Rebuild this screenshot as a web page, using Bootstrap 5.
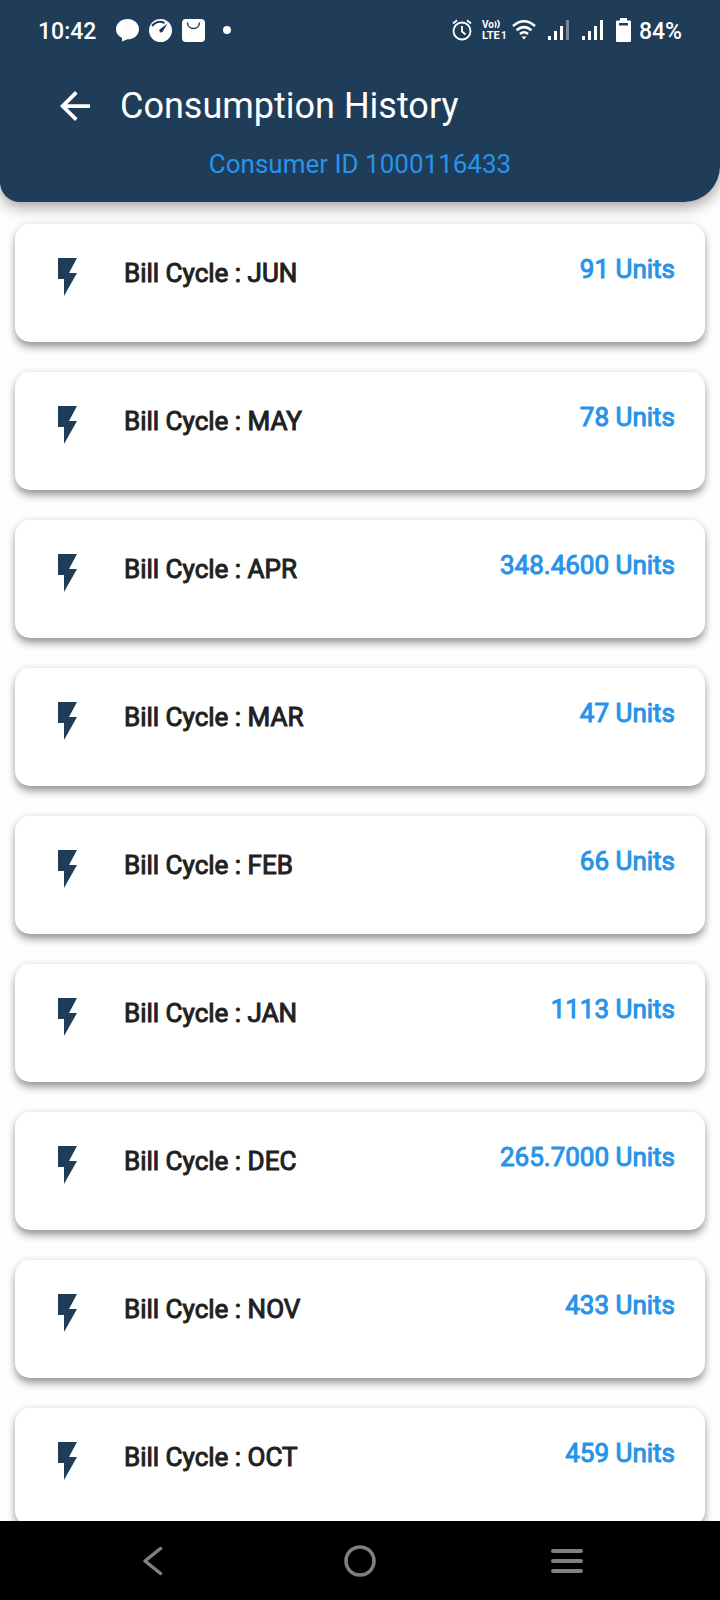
<!DOCTYPE html>
<html lang="en">
<head>
<meta charset="utf-8">
<meta name="viewport" content="width=device-width, initial-scale=1">
<title>Consumption History</title>
<link href="https://cdn.jsdelivr.net/npm/bootstrap@5.3.0/dist/css/bootstrap.min.css" rel="stylesheet">
<style>
  :root { --navy: #1f3c58; --sky: #2893ea; }
  body { font-family: Roboto, "Noto Sans", sans-serif; background: #fefefe; }
  svg { display: block; flex: none; }
  .app-header {
    background: var(--navy);
    border-radius: 0 0 36px 20px;
    box-shadow: 0 4px 16px rgba(0, 0, 0, .4);
    z-index: 1;
  }
  .status-bar { height: 60px; padding: 0 38px; font-size: 23px; line-height: 28px; font-weight: 500; }
  .status-text { padding-top: 4px; }
  .notices { gap: 10px; margin-left: 20px; }
  .title-row { height: 88px; padding: 4px 60px 0; gap: 30px; }
  .screen-title { font-size: 36px; line-height: 44px; }
  .consumer-id { font-size: 26px; line-height: 32px; color: var(--sky); padding-bottom: 22px; }
  .scroll-area { scrollbar-width: none; }
  .scroll-area::-webkit-scrollbar { display: none; }
  .bill-list { padding: 22px 15px; gap: 30px; }
  .bill-card {
    --bs-card-border-width: 0;
    --bs-card-border-radius: 15px;
    height: 118px;
    flex: none;
    box-shadow: 0 6px 8px -1px rgba(0, 0, 0, .36), 0 1px 8px rgba(0, 0, 0, .14);
  }
  .bill-body { padding: 29px 30px 0 43px; font-size: 26px; line-height: 32px; }
  .bill-icon { margin-top: 5px; }
  .bill-name { margin: 4px 0 0 47px; color: #212121; -webkit-text-stroke: 1px #212121; }
  .bill-units { color: var(--sky); -webkit-text-stroke: 1px var(--sky); }
  .system-nav { height: 79px; padding: 0 50px; }
</style>
</head>
<body>
<div class="d-flex flex-column vh-100 overflow-hidden">
  <header class="app-header text-white position-relative flex-shrink-0">
    <div class="status-bar d-flex align-items-center">
      <span class="status-text">10:42</span>
      <div class="notices d-flex align-items-center">
        <svg width="23" height="23" viewBox="0 0 23 23" aria-hidden="true"><path fill="#fff" d="M11.500 0C18 0 23 4.500 23 10.200S18 20.300 11.500 20.300L6 22.500V19C2 17 0 14 0 10.200 0 4.500 5 0 11.500 0z"/></svg>
        <svg width="23" height="23" viewBox="0 0 23 23" aria-hidden="true"><circle cx="11.500" cy="11.500" r="11.500" fill="#fff"/><path d="M3 7C7 2.500 12 2.300 15.500 4" fill="none" stroke="#1f3c58" stroke-width="2"/><path d="M18.500 4.500L13.500 13a2 2 0 0 1-3-2.500z" fill="#1f3c58"/></svg>
        <svg width="23" height="23" viewBox="0 0 23 23" aria-hidden="true"><rect width="23" height="23" rx="4" fill="#fff"/><path d="M5.500 3.500c0 8 12 8 12 0" fill="none" stroke="#1f3c58" stroke-width="1.500"/></svg>
        <svg class="ms-2" width="8" height="8" viewBox="0 0 8 8" aria-hidden="true"><circle cx="4" cy="4" r="4" fill="#fff"/></svg>
      </div>
      <div class="d-flex align-items-center ms-auto">
        <svg width="20" height="22" viewBox="0 0 20 22" fill="none" stroke="#fff" stroke-width="1.800" aria-hidden="true"><circle cx="10" cy="12" r="8.500"/><path d="M10 7v5.500l3.500 3M1 4.500L5 1.200M19 4.500L15 1.200"/></svg>
        <svg class="ms-2" width="28" height="22" viewBox="0 0 28 22" fill="#fff" font-family="Roboto, sans-serif" font-weight="700" aria-hidden="true"><text x="2" y="9" font-size="10">Vo</text><path d="M15 2.500q2 2.500 0 6M17.500 1q3.500 4 0 8" fill="none" stroke="#fff" stroke-width="1.500"/><text x="2" y="20" font-size="11">LTE</text><text x="21" y="20" font-size="10">1</text></svg>
        <svg class="ms-1" width="24" height="22" viewBox="0 0 24 22" fill="none" stroke="#fff" stroke-width="2.600" aria-hidden="true"><path d="M1 7Q12-2.500 23 7M4.500 11.200Q12 5 19.500 11.200M8 15Q12 11.500 16 15"/><path d="M9.500 17.500h5L12 20.500z" fill="#fff" stroke="none"/></svg>
        <svg class="ms-2 ps-1" width="26" height="20" viewBox="0 0 22 20" fill="#fff" aria-hidden="true"><path d="M0 16h3v4H0zM6 11h3v9H6zM12 6h3v14h-3z"/><path d="M18 0h3v20h-3z" opacity=".4"/></svg>
        <svg class="ms-2 ps-1" width="26" height="20" viewBox="0 0 22 20" fill="#fff" aria-hidden="true"><path d="M0 16h3v4H0zM6 11h3v9H6zM12 6h3v14h-3zM18 0h3v20h-3z"/></svg>
        <svg class="ms-2 ps-1" width="19" height="24" viewBox="0 0 15 24" aria-hidden="true"><path fill="#fff" fill-rule="evenodd" d="M4 0h7v2.500h3q1 0 1 1V23q0 1-1 1H1q-1 0-1-1V3.500q0-1 1-1h3zM3 5v2.500h9V5z"/></svg>
        <span class="status-text ms-2">84%</span>
      </div>
    </div>
    <div class="title-row d-flex align-items-center">
      <button type="button" class="btn p-0 border-0" aria-label="Back">
        <svg width="30" height="30" viewBox="4 4 16 16"><path fill="#fff" d="M20 11H7.830l5.590-5.590L12 4l-8 8 8 8 1.410-1.410L7.830 13H20v-2z"/></svg>
      </button>
      <h1 class="screen-title fw-normal mb-0">Consumption History</h1>
    </div>
    <p class="consumer-id text-center mb-0">Consumer ID 1000116433</p>
  </header>

  <main class="scroll-area flex-grow-1 overflow-auto">
    <div id="bills" class="bill-list d-flex flex-column"></div>
  </main>

  <nav class="system-nav bg-black d-flex flex-shrink-0 align-items-center" aria-label="System">
    <button type="button" class="btn p-0 border-0 flex-fill w-100 d-flex justify-content-center" aria-label="Back"><svg width="20" height="30" viewBox="0 0 20 30" fill="none" stroke="#808080" stroke-width="3.500" stroke-linecap="round" stroke-linejoin="round"><path d="M17.500 2.500L2 15l15.500 12.500"/></svg></button>
    <button type="button" class="btn p-0 border-0 flex-fill w-100 d-flex justify-content-center" aria-label="Home"><svg width="32" height="32" viewBox="0 0 32 32" fill="none" stroke="#808080" stroke-width="3.500"><circle cx="16" cy="16" r="14"/></svg></button>
    <button type="button" class="btn p-0 border-0 flex-fill w-100 d-flex justify-content-center" aria-label="Recent apps"><svg width="34" height="26" viewBox="0 0 34 26" stroke="#808080" stroke-width="4" stroke-linecap="round"><path d="M3 3h28M3 13h28M3 23h28"/></svg></button>
  </nav>
</div>

<template id="bill-template">
  <article class="card bill-card">
    <div class="bill-body d-flex align-items-start">
      <svg class="bill-icon" width="19" height="38" viewBox="0 0 19 38" aria-hidden="true"><path fill="#1f3c58" d="M0 0h19l-8 15h8L6 38V21H0z"/></svg>
      <span class="bill-name"></span>
      <span class="bill-units ms-auto"></span>
    </div>
  </article>
</template>
<script src="https://cdn.jsdelivr.net/npm/bootstrap@5.3.0/dist/js/bootstrap.bundle.min.js"></script>
<script>
  const bills = [
    ["JUN", "91"], ["MAY", "78"], ["APR", "348.4600"], ["MAR", "47"], ["FEB", "66"],
    ["JAN", "1113"], ["DEC", "265.7000"], ["NOV", "433"], ["OCT", "459"]
  ];
  const list = document.getElementById("bills");
  const template = document.getElementById("bill-template");
  for (const [month, units] of bills) {
    const card = template.content.cloneNode(true);
    card.querySelector(".bill-name").textContent = `Bill Cycle : ${month}`;
    card.querySelector(".bill-units").textContent = `${units} Units`;
    list.append(card);
  }
</script>
</body>
</html>
